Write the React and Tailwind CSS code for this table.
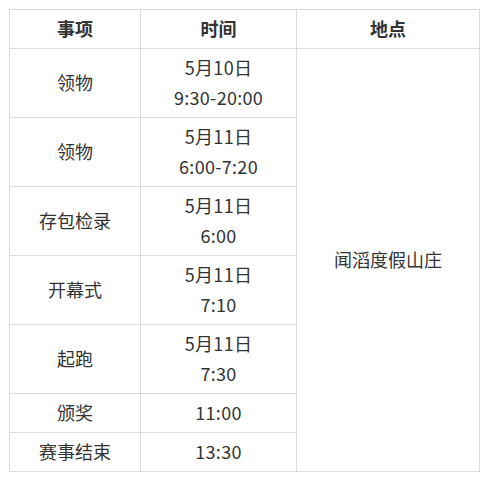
import React from "react";

const rows = [
  ["领物", ["5月10日", "9:30-20:00"]],
  ["领物", ["5月11日", "6:00-7:20"]],
  ["存包检录", ["5月11日", "6:00"]],
  ["开幕式", ["5月11日", "7:10"]],
  ["起跑", ["5月11日", "7:30"]],
  ["颁奖", ["11:00"]],
  ["赛事结束", ["13:30"]],
];

export default function App() {
  const cell = "border border-[#dcdcdc] text-center align-middle pt-[3px] pb-[5px] leading-[30px]";
  return (
    <div
      className="w-[484px] h-[483px] bg-white pt-[9px] pl-[9px] text-[18px] text-[#333]"
      style={{ fontFamily: '"Noto Sans CJK SC", "Noto Sans", sans-serif' }}
    >
      <table className="border-collapse w-[470px] table-fixed">
        <colgroup>
          <col className="w-[131px]" />
          <col className="w-[156px]" />
          <col className="w-[183px]" />
        </colgroup>
        <thead>
          <tr>
            <th className={cell + " font-bold"}>事项</th>
            <th className={cell + " font-bold"}>时间</th>
            <th className={cell + " font-bold"}>地点</th>
          </tr>
        </thead>
        <tbody>
          {rows.map((r, i) => (
            <tr key={i}>
              <td className={cell}>{r[0]}</td>
              <td className={cell + " tracking-[0.3px]"}>
                {r[1].map((t, j) => (
                  <div key={j}>{t}</div>
                ))}
              </td>
              {i === 0 && (
                <td className={cell} rowSpan={7}>
                  闻滔度假山庄
                </td>
              )}
            </tr>
          ))}
        </tbody>
      </table>
    </div>
  );
}
